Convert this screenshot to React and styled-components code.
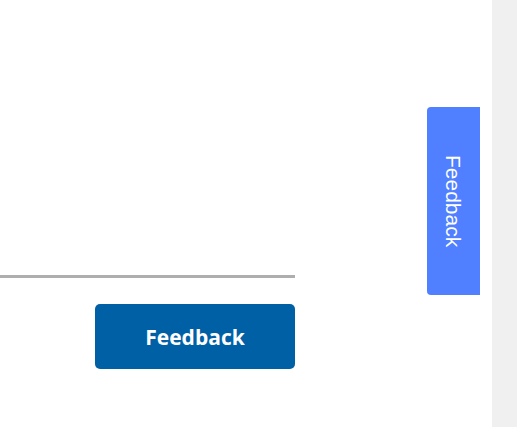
import React from "react";
import styled, { createGlobalStyle } from "styled-components";

const GlobalStyle = createGlobalStyle`
  html, body {
    margin: 0;
    padding: 0;
    background: #ffffff;
  }
  #root {
    height: 427px;
  }
`;

function App() {
  return (
    <>
      <GlobalStyle />
      <Page>
        <Main>
          <Content>
            <Divider />
            <Actions>
              <Button type="button">Feedback</Button>
            </Actions>
          </Content>
          <SideTab type="button">
            <SideLabel>Feedback</SideLabel>
          </SideTab>
        </Main>
        <Track />
      </Page>
    </>
  );
}

export default App;

const Page = styled.div`
  display: flex;
  height: 427px;
  width: 517px;
  overflow: hidden;
`;

const Main = styled.main`
  position: relative;
  flex: 1;
  background: #ffffff;
`;

const Content = styled.section`
  width: 295px;
  padding-top: 275px;
  display: flex;
  flex-direction: column;
`;

const Divider = styled.hr`
  margin: 0;
  border: none;
  height: 3px;
  background: #aeaeae;
`;

const Actions = styled.div`
  display: flex;
  justify-content: flex-end;
  margin-top: 26px;
`;

const Button = styled.button`
  width: 200px;
  height: 65px;
  padding: 0;
  border: none;
  border-radius: 5px;
  background: #0060a6;
  color: #ffffff;
  font-family: "Open Sans", sans-serif;
  font-weight: 700;
  font-size: 21px;
  cursor: pointer;
`;

const SideTab = styled.button`
  position: absolute;
  top: 107px;
  left: 427px;
  width: 53px;
  height: 188px;
  padding: 0;
  border: none;
  border-radius: 4px 0 0 4px;
  background: #5080ff;
  display: flex;
  align-items: center;
  justify-content: center;
  cursor: pointer;
`;

const SideLabel = styled.span`
  writing-mode: vertical-rl;
  color: #ffffff;
  font-family: "Liberation Sans", Arial, sans-serif;
  font-size: 21px;
  line-height: 1;
`;

const Track = styled.aside`
  width: 25px;
  background: #f0f0f0;
`;
